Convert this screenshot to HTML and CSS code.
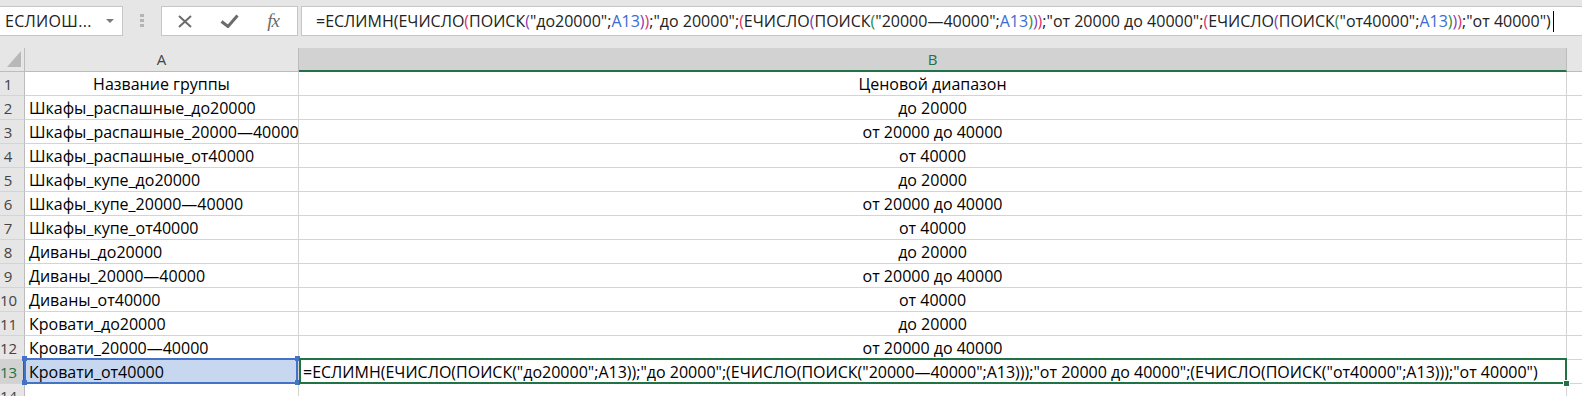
FILE: index.html
```html
<!DOCTYPE html>
<html lang="ru">
<head>
    <meta charset="UTF-8">
    <meta name="viewport" content="width=device-width, initial-scale=1.0">
    <title>ЕСЛИМН</title>
    <link rel="stylesheet" href="styles.css">
</head>
<body>
    <div class="formula-bar">
        <div class="name-box">
            <span class="name-label">ЕСЛИОШ...</span>
            <span class="dropdown"></span>
        </div>
        <div class="grip"></div>
        <div class="fx-box">
            <span class="fx-btn">
                <svg width="14" height="13" viewBox="0 0 14 13"><path d="M1 1L13 12M13 1L1 12" stroke="#6b6b6b" stroke-width="2" fill="none"/></svg>
            </span>
            <span class="fx-btn">
                <svg width="19" height="14" viewBox="0 0 19 14"><path d="M1.5 7.5L8 12.5L17.5 1.5" stroke="#6b6b6b" stroke-width="3" fill="none"/></svg>
            </span>
            <span class="fx-btn fx">fx</span>
        </div>
        <div class="formula-input">
            <span>=ЕСЛИМН(ЕЧИСЛО<i class="p1">(</i>ПОИСК<i class="p2">(</i>"до20000";<i class="ref">A13</i><i class="p2">)</i><i class="p1">)</i>;"до 20000";<i class="p1">(</i>ЕЧИСЛО<i class="p2">(</i>ПОИСК<i class="p3">(</i>"20000—40000";<i class="ref">A13</i><i class="p3">)</i><i class="p2">)</i><i class="p1">)</i>;"от 20000 до 40000";<i class="p1">(</i>ЕЧИСЛО<i class="p2">(</i>ПОИСК<i class="p3">(</i>"от40000";<i class="ref">A13</i><i class="p3">)</i><i class="p2">)</i><i class="p1">)</i>;"от 40000")</span><span class="caret"></span>
        </div>
    </div>

    <div class="sheet">
        <div class="row head">
            <div class="corner"></div>
            <div class="ch col-a">A</div>
            <div class="ch col-b selected">B</div>
            <div class="ch col-c"></div>
        </div>
        <div class="row">
            <div class="rh">1</div>
            <div class="cell col-a center">Название группы</div>
            <div class="cell col-b center">Ценовой диапазон</div>
            <div class="cell col-c"></div>
        </div>
        <div class="row">
            <div class="rh">2</div>
            <div class="cell col-a">Шкафы_распашные_до20000</div>
            <div class="cell col-b center">до 20000</div>
            <div class="cell col-c"></div>
        </div>
        <div class="row">
            <div class="rh">3</div>
            <div class="cell col-a">Шкафы_распашные_20000—40000</div>
            <div class="cell col-b center">от 20000 до 40000</div>
            <div class="cell col-c"></div>
        </div>
        <div class="row">
            <div class="rh">4</div>
            <div class="cell col-a">Шкафы_распашные_от40000</div>
            <div class="cell col-b center">от 40000</div>
            <div class="cell col-c"></div>
        </div>
        <div class="row">
            <div class="rh">5</div>
            <div class="cell col-a">Шкафы_купе_до20000</div>
            <div class="cell col-b center">до 20000</div>
            <div class="cell col-c"></div>
        </div>
        <div class="row">
            <div class="rh">6</div>
            <div class="cell col-a">Шкафы_купе_20000—40000</div>
            <div class="cell col-b center">от 20000 до 40000</div>
            <div class="cell col-c"></div>
        </div>
        <div class="row">
            <div class="rh">7</div>
            <div class="cell col-a">Шкафы_купе_от40000</div>
            <div class="cell col-b center">от 40000</div>
            <div class="cell col-c"></div>
        </div>
        <div class="row">
            <div class="rh">8</div>
            <div class="cell col-a">Диваны_до20000</div>
            <div class="cell col-b center">до 20000</div>
            <div class="cell col-c"></div>
        </div>
        <div class="row">
            <div class="rh">9</div>
            <div class="cell col-a">Диваны_20000—40000</div>
            <div class="cell col-b center">от 20000 до 40000</div>
            <div class="cell col-c"></div>
        </div>
        <div class="row">
            <div class="rh">10</div>
            <div class="cell col-a">Диваны_от40000</div>
            <div class="cell col-b center">от 40000</div>
            <div class="cell col-c"></div>
        </div>
        <div class="row">
            <div class="rh">11</div>
            <div class="cell col-a">Кровати_до20000</div>
            <div class="cell col-b center">до 20000</div>
            <div class="cell col-c"></div>
        </div>
        <div class="row">
            <div class="rh">12</div>
            <div class="cell col-a">Кровати_20000—40000</div>
            <div class="cell col-b center">от 20000 до 40000</div>
            <div class="cell col-c"></div>
        </div>
        <div class="row">
            <div class="rh selected">13</div>
            <div class="cell col-a referenced">Кровати_от40000</div>
            <div class="cell col-b editing">=ЕСЛИМН(ЕЧИСЛО(ПОИСК("до20000";A13));"до 20000";(ЕЧИСЛО(ПОИСК("20000—40000";A13)));"от 20000 до 40000";(ЕЧИСЛО(ПОИСК("от40000";A13)));"от 40000")</div>
            <div class="cell col-c"></div>
        </div>
        <div class="row">
            <div class="rh">14</div>
            <div class="cell col-a"></div>
            <div class="cell col-b"></div>
            <div class="cell col-c"></div>
        </div>
    </div>
</body>
</html>
```
FILE: styles.css
```css
body {
    margin: 0;
    background-color: #fff;
    font-family: "Open Sans", "Noto Sans", sans-serif;
    color: #111;
    overflow: hidden;
}

/* formula bar */
.formula-bar {
    display: flex;
    align-items: flex-start;
    height: 48px;
    padding-top: 6px;
    box-sizing: border-box;
    background-color: #e6e6e6;
}
.name-box {
    width: 124px;
    height: 30px;
    margin-left: -1px;
    box-sizing: border-box;
    border: 1px solid #c6c6c6;
    background-color: #fff;
    display: flex;
    align-items: center;
    padding-left: 5px;
    font-size: 16px;
    color: #222;
}
.name-label {
    flex: 1;
    letter-spacing: 0.3px;
}
.dropdown {
    width: 0;
    height: 0;
    border-left: 4px solid transparent;
    border-right: 4px solid transparent;
    border-top: 4px solid #7a7a7a;
    margin-right: 8px;
}
.grip {
    width: 4px;
    height: 14px;
    margin: 8px 17px 0 17px;
    background: repeating-linear-gradient(#b4b4b4 0 3px, transparent 3px 5px);
}
.fx-box {
    width: 137px;
    height: 30px;
    box-sizing: border-box;
    border: 1px solid #c6c6c6;
    background-color: #fff;
    display: flex;
    align-items: center;
    padding-left: 1px;
}
.fx-btn {
    width: 44px;
    display: flex;
    justify-content: center;
    align-items: center;
}
.fx {
    font-family: "Liberation Serif", serif;
    font-style: italic;
    font-size: 19px;
    color: #6b6b6b;
    letter-spacing: -1px;
}
.formula-input {
    flex: 1;
    height: 30px;
    margin-left: 3px;
    margin-right: -2px;
    box-sizing: border-box;
    border: 1px solid #c6c6c6;
    background-color: #fff;
    padding-left: 14px;
    display: flex;
    align-items: center;
    font-size: 16px;
    white-space: nowrap;
    color: #222;
}
.formula-input i {
    font-style: normal;
}
.formula-input .p1 { color: #d8336b; }
.formula-input .p2 { color: #8440b8; }
.formula-input .p3 { color: #2f8a45; }
.formula-input .ref { color: #3a6bd1; }
.caret {
    display: inline-block;
    width: 1px;
    height: 21px;
    margin-left: 2px;
    background-color: #000;
}

/* grid */
.row {
    display: flex;
    height: 24px;
}
.row > div {
    flex: none;
    box-sizing: border-box;
    height: 24px;
    white-space: nowrap;
}
.col-a { width: 274px; }
.col-b { width: 1268px; }
.col-c { width: 60px; }

.corner, .ch, .rh {
    background-color: #e6e6e6;
    color: #444;
    font-size: 15px;
}
.corner {
    width: 25px;
    position: relative;
    border-right: 1px solid #bcbcbc;
    border-bottom: 1px solid #bcbcbc;
}
.corner::after {
    content: "";
    position: absolute;
    left: 7px;
    top: 3px;
    width: 14px;
    height: 16px;
    background-color: #b8b8b8;
    clip-path: polygon(100% 0, 100% 100%, 0 100%);
}
.ch {
    text-align: center;
    line-height: 23px;
    border-right: 1px solid #bcbcbc;
    border-bottom: 1px solid #bcbcbc;
}
.ch.selected {
    background-color: #d2d2d2;
    color: #217346;
    border-bottom: 2px solid #217346;
}
.rh {
    width: 25px;
    padding-right: 8px;
    text-align: center;
    line-height: 24px;
    border-right: 1px solid #bcbcbc;
    border-bottom: 1px solid #d4d4d4;
}
.rh.selected {
    background-color: #d2d2d2;
    color: #217346;
    border-right: 2px solid #217346;
}

.cell {
    padding: 1px 4px 0;
    font-size: 16px;
    line-height: 22px;
    color: #000;
    border-right: 1px solid #d4d4d4;
    border-bottom: 1px solid #d4d4d4;
}
.cell.center {
    text-align: center;
}
.cell.referenced {
    position: relative;
    background-color: #c6d7ef;
}
.cell.referenced::before {
    content: "";
    position: absolute;
    top: -2px;
    right: 0;
    bottom: -1px;
    left: -1px;
    border: 2px solid #4472c4;
}
.cell.referenced::after {
    content: "";
    position: absolute;
    top: -4px;
    left: -3px;
    width: 5px;
    height: 5px;
    background-color: #4472c4;
    box-shadow: 273px 0 #4472c4, 0 24px #4472c4, 273px 24px #4472c4;
}
.cell.editing {
    position: relative;
    z-index: 1;
}
.cell.editing::before {
    content: "";
    position: absolute;
    top: -2px;
    right: -1px;
    bottom: -1px;
    left: 0;
    border: 2px solid #217346;
}
.cell.editing::after {
    content: "";
    position: absolute;
    right: -4px;
    bottom: -4px;
    width: 5px;
    height: 5px;
    background-color: #217346;
    border: 1px solid #fff;
}
```
